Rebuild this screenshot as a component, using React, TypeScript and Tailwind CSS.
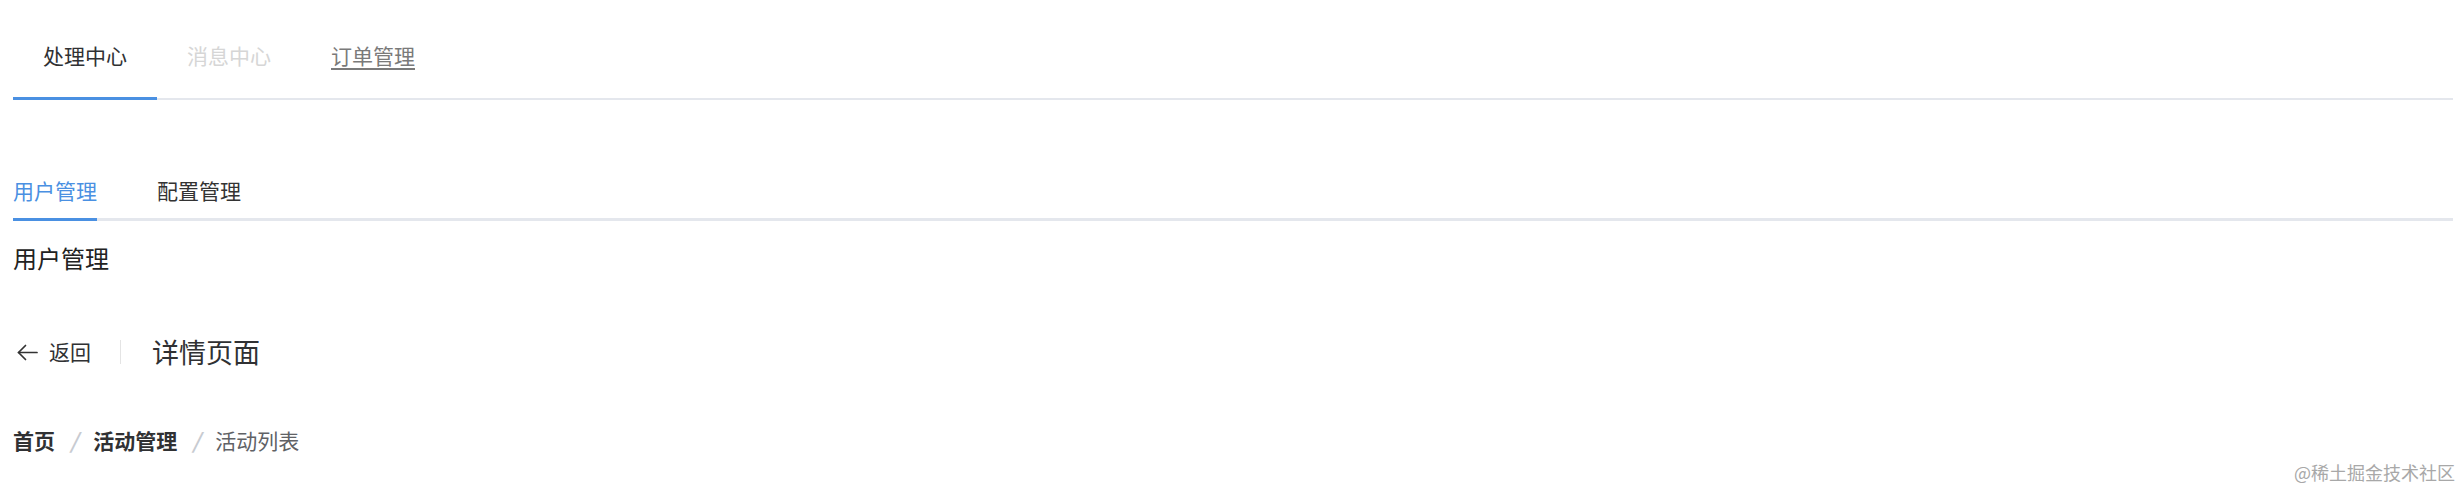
import React from 'react';

const font = { fontFamily: '"Noto Sans CJK SC", "Noto Sans", sans-serif' };

function BackArrow() {
  return (
    <svg width="21" height="17" viewBox="0 0 21 17" fill="none" stroke="#333" strokeWidth="1.7" strokeLinecap="round" strokeLinejoin="round">
      <path d="M20 8.5H1.5" />
      <path d="M8.5 1.5 1.5 8.5l7 7" />
    </svg>
  );
}

export default function App() {
  return (
    <div className="relative w-full h-[492px] bg-white pl-[13px] pr-[11px] overflow-hidden" style={font}>
      {/* top tabs */}
      <div className="pt-[14px]">
        <div className="flex border-b-[2px] border-[#e4e7ed]">
          <div className="h-[86px] -mb-[2px] flex items-center px-[30px] border-b-[3px] border-[#4a90e2] text-[21px] text-[#303133]">
            处理中心
          </div>
          <div className="h-[86px] -mb-[2px] flex items-center px-[30px] border-b-[3px] border-transparent text-[21px] text-[#d6d6d6]">
            消息中心
          </div>
          <div className="h-[86px] -mb-[2px] flex items-center px-[30px] border-b-[3px] border-transparent text-[21px] text-[#7a7a7a] underline underline-offset-[4px]">
            订单管理
          </div>
        </div>
      </div>

      {/* sub tabs */}
      <div className="mt-[64px] flex gap-[60px] border-b-[3px] border-[#e4e7ed]">
        <div className="h-[57px] -mb-[3px] flex items-center border-b-[3px] border-[#4a90e2] text-[21px] text-[#4a90e2]">
          用户管理
        </div>
        <div className="h-[57px] -mb-[3px] flex items-center border-b-[3px] border-transparent text-[21px] text-[#333]">
          配置管理
        </div>
      </div>

      <div className="mt-[19px] text-[24px] leading-[36px] text-[#222]">用户管理</div>

      {/* page header */}
      <div className="mt-[56px] h-[40px] flex items-center">
        <div className="flex items-center pl-[4px]">
          <BackArrow />
          <span className="ml-[11px] text-[21px] text-[#303133]">返回</span>
        </div>
        <div className="ml-[29px] mr-[31px] w-[1px] h-[24px] bg-[#e4e4e4]" />
        <div className="text-[27px] text-[#303133]">详情页面</div>
      </div>

      {/* breadcrumb */}
      <div className="mt-[54px] h-[30px] flex items-center text-[21px]">
        <span className="font-bold text-[#303133]">首页</span>
        <span className="mx-[15px] font-bold text-[#c8cbd1] italic">/</span>
        <span className="font-bold text-[#303133]">活动管理</span>
        <span className="mx-[15px] font-bold text-[#c8cbd1] italic">/</span>
        <span className="text-[#606266]">活动列表</span>
      </div>

      <div className="absolute right-[9px] bottom-[6px] text-[18px] text-[#a8a8a8]">@稀土掘金技术社区</div>
    </div>
  );
}
